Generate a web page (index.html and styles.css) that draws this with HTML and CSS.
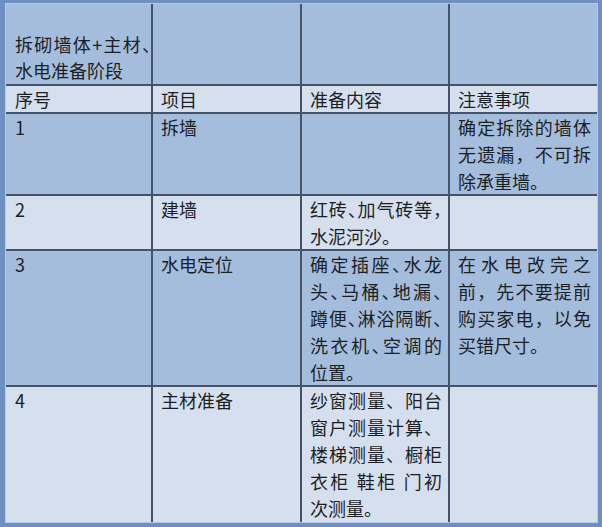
FILE: index.html
```html
<!DOCTYPE html>
<html lang="zh-CN">
<head>
<meta charset="utf-8">
<link rel="stylesheet" href="styles.css">
</head>
<body>
<div class="grid">
  <div class="row blue">
    <div class="cell title"><p class="title-text">拆砌墙体+主材<span class="half">、</span>水电准备阶段</p></div>
    <div class="cell"></div><div class="cell"></div><div class="cell"></div>
  </div>
  <div class="row light">
    <div class="cell first">序号</div><div class="cell">项目</div><div class="cell">准备内容</div><div class="cell">注意事项</div>
  </div>
  <div class="row blue">
    <div class="cell first">1</div><div class="cell">拆墙</div><div class="cell"></div><div class="cell">确定拆除的墙体无遗漏，不可拆除承重墙。</div>
  </div>
  <div class="row light">
    <div class="cell first">2</div><div class="cell">建墙</div><div class="cell">红砖<span class="half">、</span>加气砖等<span class="half">，</span>水泥河沙。</div><div class="cell"></div>
  </div>
  <div class="row blue">
    <div class="cell first">3</div><div class="cell">水电定位</div><div class="cell">确定插座<span class="half">、</span>水龙头<span class="half">、</span>马桶<span class="half">、</span>地漏<span class="half">、</span>蹲便<span class="half">、</span>淋浴隔断<span class="half">、</span>洗衣机<span class="half">、</span>空调的位置。</div><div class="cell">在水电改完之前，先不要提前购买家电，以免买错尺寸。</div>
  </div>
  <div class="row light">
    <div class="cell first">4</div><div class="cell">主材准备</div><div class="cell">纱窗测量、阳台窗户测量计算、楼梯测量、橱柜衣柜 鞋柜 门初次测量。</div><div class="cell"></div>
  </div>
</div>
</body>
</html>
```
FILE: styles.css
```css
html, body {
  margin: 0;
  padding: 0;
  background: #6f8fc1;
}
body {
  width: 602px;
  height: 527px;
  overflow: hidden;
  padding-top: 4px;
  padding-left: 6px;
  box-sizing: border-box;
}
.grid {
  display: grid;
  grid-template-columns: 145px 147px 146px 147px;
  grid-template-rows: 80px 26px 80px 53px 134px 135px;
  gap: 2px;
  width: 591px;
  background: #44536a;
  outline: 1px solid #b9cbe4;
  font-family: "Noto Sans CJK SC", "Noto Sans", sans-serif;
  font-size: 18px;
  line-height: 27px;
  color: #1b1f25;
}
.row { display: contents; }
.cell {
  padding: 0 6px 0 8px;
  text-align: justify;
  min-width: 0;
}
.cell.first, .cell.title { padding-left: 9px; }
.blue .cell { background: #a5bddd; }
.light .cell { background: #d6dfee; }
.title {
  display: flex;
  align-items: flex-end;
  padding-right: 0;
  padding-bottom: 1px;
}
.title-text {
  margin: 0;
  line-height: 26px;
}
.half { font-feature-settings: "halt"; }
```
